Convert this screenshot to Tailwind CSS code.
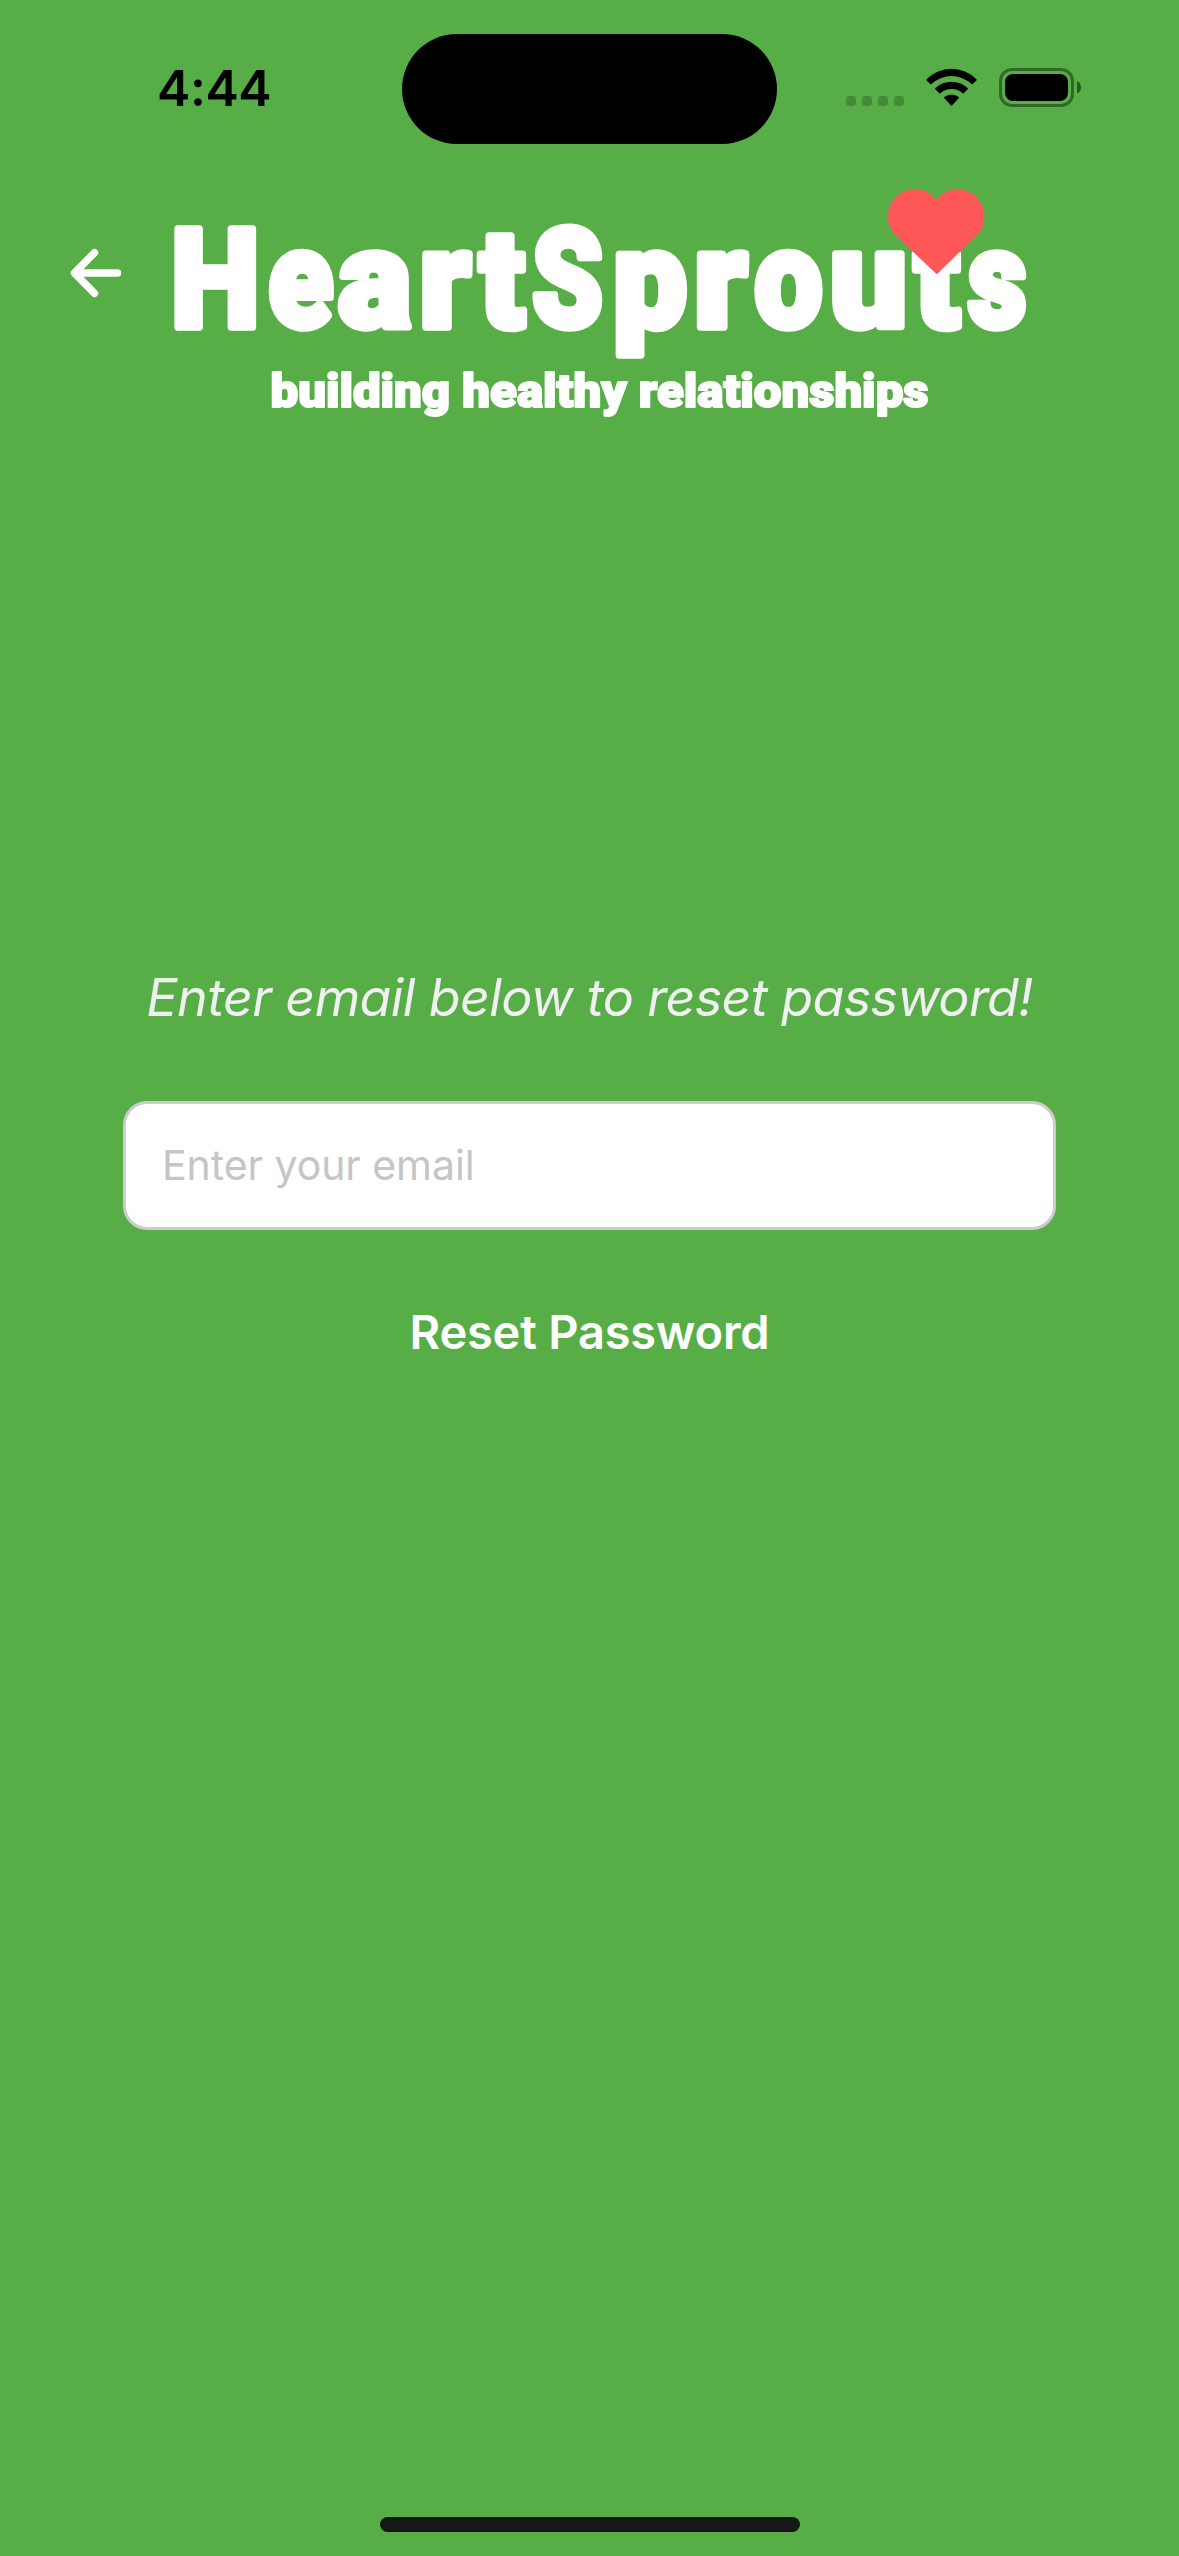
<!DOCTYPE html>
<html lang="en">
<head>
<meta charset="utf-8">
<title>HeartSprouts – Reset Password</title>
<script src="https://cdn.jsdelivr.net/npm/@tailwindcss/browser@4"></script>
</head>
<body class="bg-[#57ae46]">
<div class="flex h-[2556px] w-[1179px] flex-col overflow-hidden bg-[#57ae46] font-['Inter',sans-serif]">
  <!-- Status bar -->
  <div class="flex h-[177px] items-start pt-[34px]">
    <div class="flex h-[110px] w-[402px] items-center pl-[157px]"><span class="-mt-[3px] text-[50px] leading-none font-semibold tracking-[-0.4px] text-black">4:44</span></div>
    <div class="h-[110px] w-[375px] rounded-full bg-black"></div>
    <div class="flex h-[110px] pt-[34px] pl-[69px]">
      <div class="flex gap-[6px] pt-[28px]">
        <i class="size-[10px] rounded-[3px] bg-black/20"></i>
        <i class="size-[10px] rounded-[3px] bg-black/20"></i>
        <i class="size-[10px] rounded-[3px] bg-black/20"></i>
        <i class="size-[10px] rounded-[3px] bg-black/20"></i>
      </div>
      <svg class="ml-[22px] h-[39px] w-[51px]" viewBox="0 0 51 39">
        <path d="M.6 11.2A35 35 0 0 1 50.4 11.2Q51 11.8 50.4 12.4L46.8 16Q46.200 16.600 45.600 16A29.500 29.500 0 0 0 5.400 16Q4.800 16.600 4.200 16L.6 12.400Q0 11.800 .6 11.200Z"/>
        <path d="M9.400 20.100A23.500 23.500 0 0 1 41.600 20.100Q42.300 20.700 41.700 21.300L37.700 25.200Q37.100 25.800 36.500 25.200A16.500 16.500 0 0 0 14.500 25.200Q13.900 25.800 13.300 25.200L9.300 21.300Q8.700 20.700 9.400 20.100Z"/>
        <path d="M18.300 29A11.500 11.500 0 0 1 32.700 29Q33.300 29.600 32.700 30.200L26.200 37.200Q25.500 38 24.800 37.200L18.300 30.200Q17.700 29.600 18.300 29Z"/>
      </svg>
      <svg class="ml-[22px] h-[39px] w-[83px]" viewBox="0 0 83 39">
        <rect x="1.500" y="1.500" width="72" height="36" rx="11.500" fill="none" stroke="#000" stroke-opacity=".4" stroke-width="3"/>
        <rect x="6" y="6" width="63" height="27" rx="8"/>
        <path d="M78 13Q82 15 82 19.500T78 25.500Z" fill-opacity=".5"/>
      </svg>
    </div>
  </div>

  <!-- Header: back button and logo -->
  <header class="flex h-[263px] items-start">
    <button aria-label="Back" class="mt-[68px] ml-[68px] size-[56px]">
      <svg viewBox="0 0 56 56" class="size-full" fill="none" stroke="#fff" stroke-width="7.500" stroke-linecap="round" stroke-linejoin="round"><path d="M26.500 7.700L6.500 28L26.500 48.300M7 28H49.500"/></svg>
    </button>
    <svg class="ml-[16px] h-[263px] w-[920px]" viewBox="140 177 920 263" font-family="Roboto, sans-serif" font-weight="900" fill="#fff" stroke="#fff" stroke-linejoin="round">
      <text y="327.200" font-size="137" stroke-width="7.500"><tspan x="171" textLength="88.500" lengthAdjust="spacingAndGlyphs">H</tspan><tspan x="268.600" textLength="64.500" lengthAdjust="spacingAndGlyphs">e</tspan><tspan x="338.200" textLength="73" lengthAdjust="spacingAndGlyphs">a</tspan><tspan x="419.500" textLength="51" lengthAdjust="spacingAndGlyphs">r</tspan><tspan x="479.500" textLength="45.500" lengthAdjust="spacingAndGlyphs">t</tspan><tspan x="532" textLength="71" lengthAdjust="spacingAndGlyphs">S</tspan><tspan x="613" textLength="74" lengthAdjust="spacingAndGlyphs">p</tspan><tspan x="694" textLength="53" lengthAdjust="spacingAndGlyphs">r</tspan><tspan x="754.600" textLength="68" lengthAdjust="spacingAndGlyphs">o</tspan><tspan x="830" textLength="77" lengthAdjust="spacingAndGlyphs">u</tspan><tspan x="914.500" textLength="45.500" lengthAdjust="spacingAndGlyphs">t</tspan><tspan x="968" textLength="58.500" lengthAdjust="spacingAndGlyphs">s</tspan></text>
      <text x="270.500" y="407" font-size="47" stroke-width="2" textLength="658" lengthAdjust="spacingAndGlyphs">building healthy relationships</text>
      <g fill="#ff5757" stroke="none">
        <circle cx="914.800" cy="216.300" r="27"/>
        <circle cx="957.400" cy="216.300" r="27"/>
        <path d="M936.500 199.500L957 216L976.500 235.400L936.800 274.300L895.700 235.400L915 216Z"/>
      </g>
    </svg>
  </header>

  <!-- Reset form -->
  <main class="flex flex-1 flex-col items-center">
    <h1 class="mt-[525px] h-[66px] text-[52px] leading-[66px] tracking-[-0.630px] whitespace-nowrap text-[#f0f0f0] italic">Enter email below to reset password!</h1>
    <input type="email" placeholder="Enter your email" class="mt-[70px] h-[129px] w-[933px] rounded-[24px] border-[3px] border-[#ccc] bg-white px-[36px] pb-[2px] text-[41px] tracking-[-0.050px] placeholder:text-[#c5c5c7]">
    <button class="mt-[72px] h-[60px] text-[47px] leading-[60px] font-semibold tracking-[-0.200px] whitespace-nowrap text-white">Reset Password</button>
  </main>

  <!-- Home indicator -->
  <div class="flex h-[39px] justify-center"><div class="h-[15px] w-[420px] rounded-full bg-[#171717]"></div></div>
</div>
</body>
</html>
